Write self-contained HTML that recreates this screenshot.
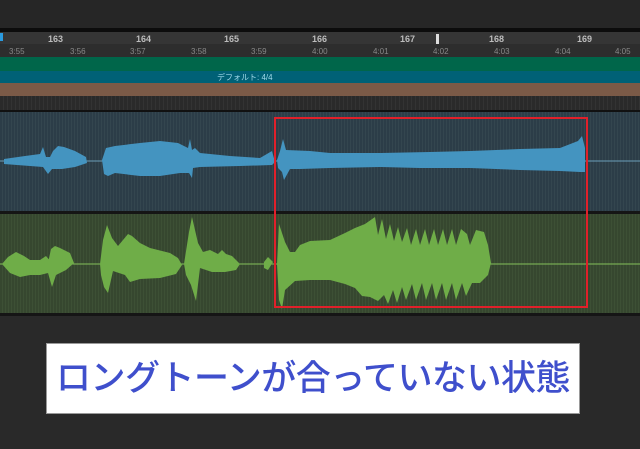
<!DOCTYPE html>
<html><head><meta charset="utf-8"><style>
body{margin:0;width:640px;height:449px;background:#292929;position:relative;overflow:hidden;font-family:"Liberation Sans","Noto Sans CJK JP",sans-serif}
div{position:absolute}
.r{color:#bdbdbd;font-size:9px;font-weight:bold;top:34px}
.t{color:#888;font-size:8px;top:47px}
</style></head><body>
<div style="left:0;top:0;width:640px;height:28px;background:#262626"></div>
<div style="left:0;top:28px;width:640px;height:4px;background:#0c0c0c"></div>
<div style="left:0;top:32px;width:640px;height:12px;background:#353535"></div>
<div style="left:0;top:44px;width:640px;height:13px;background:#2d2d2d"></div>
<div style="left:0;top:57px;width:640px;height:14px;background:#00664a"></div>
<div style="left:0;top:71px;width:640px;height:12px;background:#006176"></div>
<div style="left:0;top:83px;width:640px;height:13px;background:#7b5a47"></div>
<div style="left:0;top:96px;width:640px;height:14px;background:repeating-linear-gradient(90deg,#2a2a2a 0 3px,#333 3px 4px)"></div>
<div style="left:0;top:110px;width:640px;height:2px;background:#111"></div>
<div style="left:0;top:112px;width:640px;height:99px;background:repeating-linear-gradient(90deg,#2c3d48 0 2px,#34464f 2px 3px)"></div>
<div style="left:0;top:211px;width:640px;height:3px;background:#151515"></div>
<div style="left:0;top:214px;width:640px;height:99px;background:repeating-linear-gradient(90deg,#36472f 0 2px,#3d5035 2px 3px)"></div>
<div style="left:0;top:313px;width:640px;height:3px;background:#151515"></div>
<div style="left:0;top:33px;width:3px;height:8px;background:#2a9be0"></div>
<div class="r" style="left:48px">163</div><div class="r" style="left:136px">164</div><div class="r" style="left:224px">165</div><div class="r" style="left:312px">166</div><div class="r" style="left:400px">167</div><div class="r" style="left:489px">168</div><div class="r" style="left:577px">169</div>
<div style="left:436px;top:34px;width:3px;height:10px;background:#ddd"></div>
<div class="t" style="left:9px">3:55</div><div class="t" style="left:70px">3:56</div><div class="t" style="left:130px">3:57</div><div class="t" style="left:191px">3:58</div><div class="t" style="left:251px">3:59</div><div class="t" style="left:312px">4:00</div><div class="t" style="left:373px">4:01</div><div class="t" style="left:433px">4:02</div><div class="t" style="left:494px">4:03</div><div class="t" style="left:555px">4:04</div><div class="t" style="left:615px">4:05</div>
<div style="left:217px;top:72px;font-size:8px;color:#9fd8e8">デフォルト: 4/4</div>
<svg width="640" height="449" style="position:absolute;left:0;top:0">
<line x1="0" y1="161" x2="640" y2="161" stroke="#6a9db8" stroke-width="1"/>
<path fill="#4494c0" d="M4 159L25 156L40 154L43 147L46 157L50 157L53 151L58 146L64 147L75 151L86 157L87 163L75 167L62 169L52 169L48 174L43 167L30 166L4 164Z"/>
<path fill="#4494c0" d="M102 160L106 148L115 146L140 143L160 141L178 143L188 148L190 139L192 150L195 148L200 153L230 156L260 158L272 151L275 162L272 165L240 166L200 167L193 168L192 178L189 173L180 173L160 176L140 176L115 173L108 176L104 174Z"/>
<path fill="#4494c0" d="M277 160L280 151L283 139L286 150L310 151L330 153L380 153L430 152L470 151L520 149L560 148L578 141L582 136L585 148L585 172L580 172L560 171L520 170L470 168L420 168L380 167L330 168L300 169L290 169L284 180L282 172L278 168Z"/>
<line x1="0" y1="264" x2="640" y2="264" stroke="#84c05a" stroke-width="1"/>
<path fill="#6fad48" d="M2 264L8 257L16 252L24 256L30 260L40 260L46 256L52 263L48 263L51 249L55 246L60 248L70 253L74 263L66 270L56 275L52 287L48 273L40 275L30 275L20 277L10 273Z"/>
<path fill="#6fad48" d="M100 264L103 240L107 225L112 238L118 246L128 234L132 236L140 243L150 248L170 253L178 258L182 265L176 274L160 278L140 279L130 282L125 275L113 271L108 293L104 287L101 275Z"/>
<path fill="#6fad48" d="M184 264L189 232L192 217L195 230L198 243L203 252L210 250L218 254L222 250L226 254L232 256L240 264L236 270L225 272L212 272L200 268L196 301L191 285L186 275Z"/>
<path fill="#6fad48" d="M264 262L268 257L273 262L268 270L264 268Z"/>
<path fill="#6fad48" d="M277 264L279 224L281 230L285 242L290 252L295 252L300 245L310 241L330 240L345 233L355 228L365 224L375 217L378 235L382 219L386 239L390 224L394 241L398 227L402 242L407 228L411 245L416 229L420 245L425 229L429 245L434 229L438 245L443 229L447 245L452 229L456 245L461 229L467 234L470 245L476 230L484 232L488 245L491 263L488 275L480 283L472 283L466 296L462 283L456 300L452 283L446 300L442 283L436 300L432 283L426 300L422 283L416 300L412 284L406 300L402 287L397 303L393 290L388 304L384 295L378 301L370 297L362 296L355 288L345 284L330 280L310 280L295 281L285 290L282 309L279 300Z"/>
<rect x="275" y="118" width="312" height="189" fill="none" stroke="#e0202a" stroke-width="2"/>
</svg>
<div style="left:46px;top:343px;width:532px;height:69px;background:#fff;border:1px solid #999"></div>
<div style="left:46px;top:343px;width:534px;height:71px;text-align:center;line-height:71px;font-size:35px;font-weight:500;color:#3f4fcc;letter-spacing:-0.5px">ロングトーンが合っていない状態</div>
</body></html>
